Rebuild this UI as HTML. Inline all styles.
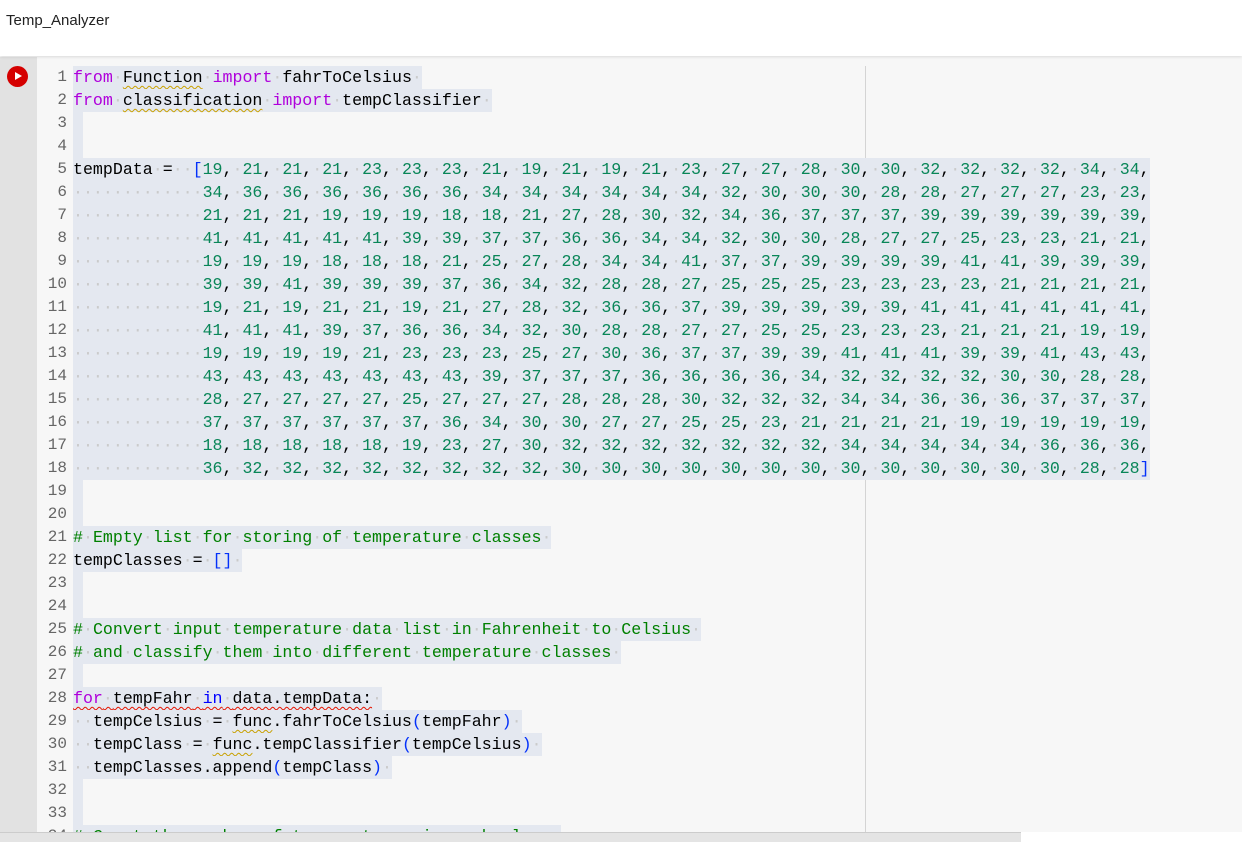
<!DOCTYPE html>
<html><head><meta charset="utf-8"><style>
*{margin:0;padding:0;box-sizing:border-box}
html{width:1242px;height:842px;overflow:hidden}
body{width:1242px;height:842px;overflow:hidden;background:#f7f7f7;position:relative;font-family:"Liberation Sans",sans-serif}
#hd{position:absolute;left:0;top:0;width:1242px;height:56px;background:#fff;box-shadow:0 1px 3px rgba(0,0,0,.12);z-index:3}
#hd span{position:absolute;left:6px;top:12px;font-size:15px;color:#222}
#gut{position:absolute;left:0;top:57px;width:37px;height:785px;background:#e2e2e2}
#run{position:absolute;left:7px;top:66px;width:21px;height:21px;border-radius:50%;background:#d50000}
#run:after{content:"";position:absolute;left:8px;top:6px;border-left:7px solid #fff;border-top:4.5px solid transparent;border-bottom:4.5px solid transparent}
#vl{position:absolute;left:865px;top:66px;width:1px;height:766px;background:#d4d4d4}
#code{position:absolute;left:0;top:0;width:1242px;height:832px;overflow:hidden}
.l{position:absolute;left:37px;height:23px;line-height:23px;font-family:"Liberation Mono",monospace;font-size:16.62px;white-space:pre;color:#000}
.l b{display:inline-block;vertical-align:top;width:30px;text-align:right;font-weight:normal;margin-right:6px;color:#666;font-size:16px}
.l s{text-decoration:none;background:#e4e8f0;display:inline-block;vertical-align:top;height:23px}
.l s.e{width:10px}
i{font-style:normal;color:#cacaca}
.k{color:#af00db}.bl{color:#0000ff}.br{color:#0431fa}.c{color:#008000}
.d{color:#098658}
c{color:#000}
.w{text-decoration:underline wavy #c8a000;text-decoration-thickness:1px;text-underline-offset:3px}
.wr{text-decoration:underline wavy #e51400;text-decoration-thickness:1px;text-underline-offset:3px}
#sb{position:absolute;left:0;top:832px;width:1021px;height:10px;background:#e4e4e4;border-top:1px solid #ccc}
#sbw{position:absolute;left:1021px;top:832px;width:221px;height:10px;background:#fff}
</style></head><body>
<div id="hd"><span>Temp_Analyzer</span></div>
<div id="gut"></div><div id="run"></div>
<div id="code">
<div id="vl"></div>
<div class="l" style="top:66px"><b>1</b><s><span class="k">from</span><i>·</i><span class="w">Function</span><i>·</i><span class="k">import</span><i>·</i>fahrToCelsius<i>·</i></s></div>
<div class="l" style="top:89px"><b>2</b><s><span class="k">from</span><i>·</i><span class="w">classification</span><i>·</i><span class="k">import</span><i>·</i>tempClassifier<i>·</i></s></div>
<div class="l" style="top:112px"><b>3</b><s class="e"></s></div>
<div class="l" style="top:135px"><b>4</b><s class="e"></s></div>
<div class="l" style="top:158px"><b>5</b><s>tempData<i>·</i>=<i>··</i><span class="br">[</span><span class="d">19<c>,<i>·</i></c>21<c>,<i>·</i></c>21<c>,<i>·</i></c>21<c>,<i>·</i></c>23<c>,<i>·</i></c>23<c>,<i>·</i></c>23<c>,<i>·</i></c>21<c>,<i>·</i></c>19<c>,<i>·</i></c>21<c>,<i>·</i></c>19<c>,<i>·</i></c>21<c>,<i>·</i></c>23<c>,<i>·</i></c>27<c>,<i>·</i></c>27<c>,<i>·</i></c>28<c>,<i>·</i></c>30<c>,<i>·</i></c>30<c>,<i>·</i></c>32<c>,<i>·</i></c>32<c>,<i>·</i></c>32<c>,<i>·</i></c>32<c>,<i>·</i></c>34<c>,<i>·</i></c>34<c>,</c></span></s></div>
<div class="l" style="top:181px"><b>6</b><s><i>·············</i><span class="d">34<c>,<i>·</i></c>36<c>,<i>·</i></c>36<c>,<i>·</i></c>36<c>,<i>·</i></c>36<c>,<i>·</i></c>36<c>,<i>·</i></c>36<c>,<i>·</i></c>34<c>,<i>·</i></c>34<c>,<i>·</i></c>34<c>,<i>·</i></c>34<c>,<i>·</i></c>34<c>,<i>·</i></c>34<c>,<i>·</i></c>32<c>,<i>·</i></c>30<c>,<i>·</i></c>30<c>,<i>·</i></c>30<c>,<i>·</i></c>28<c>,<i>·</i></c>28<c>,<i>·</i></c>27<c>,<i>·</i></c>27<c>,<i>·</i></c>27<c>,<i>·</i></c>23<c>,<i>·</i></c>23<c>,</c></span></s></div>
<div class="l" style="top:204px"><b>7</b><s><i>·············</i><span class="d">21<c>,<i>·</i></c>21<c>,<i>·</i></c>21<c>,<i>·</i></c>19<c>,<i>·</i></c>19<c>,<i>·</i></c>19<c>,<i>·</i></c>18<c>,<i>·</i></c>18<c>,<i>·</i></c>21<c>,<i>·</i></c>27<c>,<i>·</i></c>28<c>,<i>·</i></c>30<c>,<i>·</i></c>32<c>,<i>·</i></c>34<c>,<i>·</i></c>36<c>,<i>·</i></c>37<c>,<i>·</i></c>37<c>,<i>·</i></c>37<c>,<i>·</i></c>39<c>,<i>·</i></c>39<c>,<i>·</i></c>39<c>,<i>·</i></c>39<c>,<i>·</i></c>39<c>,<i>·</i></c>39<c>,</c></span></s></div>
<div class="l" style="top:227px"><b>8</b><s><i>·············</i><span class="d">41<c>,<i>·</i></c>41<c>,<i>·</i></c>41<c>,<i>·</i></c>41<c>,<i>·</i></c>41<c>,<i>·</i></c>39<c>,<i>·</i></c>39<c>,<i>·</i></c>37<c>,<i>·</i></c>37<c>,<i>·</i></c>36<c>,<i>·</i></c>36<c>,<i>·</i></c>34<c>,<i>·</i></c>34<c>,<i>·</i></c>32<c>,<i>·</i></c>30<c>,<i>·</i></c>30<c>,<i>·</i></c>28<c>,<i>·</i></c>27<c>,<i>·</i></c>27<c>,<i>·</i></c>25<c>,<i>·</i></c>23<c>,<i>·</i></c>23<c>,<i>·</i></c>21<c>,<i>·</i></c>21<c>,</c></span></s></div>
<div class="l" style="top:250px"><b>9</b><s><i>·············</i><span class="d">19<c>,<i>·</i></c>19<c>,<i>·</i></c>19<c>,<i>·</i></c>18<c>,<i>·</i></c>18<c>,<i>·</i></c>18<c>,<i>·</i></c>21<c>,<i>·</i></c>25<c>,<i>·</i></c>27<c>,<i>·</i></c>28<c>,<i>·</i></c>34<c>,<i>·</i></c>34<c>,<i>·</i></c>41<c>,<i>·</i></c>37<c>,<i>·</i></c>37<c>,<i>·</i></c>39<c>,<i>·</i></c>39<c>,<i>·</i></c>39<c>,<i>·</i></c>39<c>,<i>·</i></c>41<c>,<i>·</i></c>41<c>,<i>·</i></c>39<c>,<i>·</i></c>39<c>,<i>·</i></c>39<c>,</c></span></s></div>
<div class="l" style="top:273px"><b>10</b><s><i>·············</i><span class="d">39<c>,<i>·</i></c>39<c>,<i>·</i></c>41<c>,<i>·</i></c>39<c>,<i>·</i></c>39<c>,<i>·</i></c>39<c>,<i>·</i></c>37<c>,<i>·</i></c>36<c>,<i>·</i></c>34<c>,<i>·</i></c>32<c>,<i>·</i></c>28<c>,<i>·</i></c>28<c>,<i>·</i></c>27<c>,<i>·</i></c>25<c>,<i>·</i></c>25<c>,<i>·</i></c>25<c>,<i>·</i></c>23<c>,<i>·</i></c>23<c>,<i>·</i></c>23<c>,<i>·</i></c>23<c>,<i>·</i></c>21<c>,<i>·</i></c>21<c>,<i>·</i></c>21<c>,<i>·</i></c>21<c>,</c></span></s></div>
<div class="l" style="top:296px"><b>11</b><s><i>·············</i><span class="d">19<c>,<i>·</i></c>21<c>,<i>·</i></c>19<c>,<i>·</i></c>21<c>,<i>·</i></c>21<c>,<i>·</i></c>19<c>,<i>·</i></c>21<c>,<i>·</i></c>27<c>,<i>·</i></c>28<c>,<i>·</i></c>32<c>,<i>·</i></c>36<c>,<i>·</i></c>36<c>,<i>·</i></c>37<c>,<i>·</i></c>39<c>,<i>·</i></c>39<c>,<i>·</i></c>39<c>,<i>·</i></c>39<c>,<i>·</i></c>39<c>,<i>·</i></c>41<c>,<i>·</i></c>41<c>,<i>·</i></c>41<c>,<i>·</i></c>41<c>,<i>·</i></c>41<c>,<i>·</i></c>41<c>,</c></span></s></div>
<div class="l" style="top:319px"><b>12</b><s><i>·············</i><span class="d">41<c>,<i>·</i></c>41<c>,<i>·</i></c>41<c>,<i>·</i></c>39<c>,<i>·</i></c>37<c>,<i>·</i></c>36<c>,<i>·</i></c>36<c>,<i>·</i></c>34<c>,<i>·</i></c>32<c>,<i>·</i></c>30<c>,<i>·</i></c>28<c>,<i>·</i></c>28<c>,<i>·</i></c>27<c>,<i>·</i></c>27<c>,<i>·</i></c>25<c>,<i>·</i></c>25<c>,<i>·</i></c>23<c>,<i>·</i></c>23<c>,<i>·</i></c>23<c>,<i>·</i></c>21<c>,<i>·</i></c>21<c>,<i>·</i></c>21<c>,<i>·</i></c>19<c>,<i>·</i></c>19<c>,</c></span></s></div>
<div class="l" style="top:342px"><b>13</b><s><i>·············</i><span class="d">19<c>,<i>·</i></c>19<c>,<i>·</i></c>19<c>,<i>·</i></c>19<c>,<i>·</i></c>21<c>,<i>·</i></c>23<c>,<i>·</i></c>23<c>,<i>·</i></c>23<c>,<i>·</i></c>25<c>,<i>·</i></c>27<c>,<i>·</i></c>30<c>,<i>·</i></c>36<c>,<i>·</i></c>37<c>,<i>·</i></c>37<c>,<i>·</i></c>39<c>,<i>·</i></c>39<c>,<i>·</i></c>41<c>,<i>·</i></c>41<c>,<i>·</i></c>41<c>,<i>·</i></c>39<c>,<i>·</i></c>39<c>,<i>·</i></c>41<c>,<i>·</i></c>43<c>,<i>·</i></c>43<c>,</c></span></s></div>
<div class="l" style="top:365px"><b>14</b><s><i>·············</i><span class="d">43<c>,<i>·</i></c>43<c>,<i>·</i></c>43<c>,<i>·</i></c>43<c>,<i>·</i></c>43<c>,<i>·</i></c>43<c>,<i>·</i></c>43<c>,<i>·</i></c>39<c>,<i>·</i></c>37<c>,<i>·</i></c>37<c>,<i>·</i></c>37<c>,<i>·</i></c>36<c>,<i>·</i></c>36<c>,<i>·</i></c>36<c>,<i>·</i></c>36<c>,<i>·</i></c>34<c>,<i>·</i></c>32<c>,<i>·</i></c>32<c>,<i>·</i></c>32<c>,<i>·</i></c>32<c>,<i>·</i></c>30<c>,<i>·</i></c>30<c>,<i>·</i></c>28<c>,<i>·</i></c>28<c>,</c></span></s></div>
<div class="l" style="top:388px"><b>15</b><s><i>·············</i><span class="d">28<c>,<i>·</i></c>27<c>,<i>·</i></c>27<c>,<i>·</i></c>27<c>,<i>·</i></c>27<c>,<i>·</i></c>25<c>,<i>·</i></c>27<c>,<i>·</i></c>27<c>,<i>·</i></c>27<c>,<i>·</i></c>28<c>,<i>·</i></c>28<c>,<i>·</i></c>28<c>,<i>·</i></c>30<c>,<i>·</i></c>32<c>,<i>·</i></c>32<c>,<i>·</i></c>32<c>,<i>·</i></c>34<c>,<i>·</i></c>34<c>,<i>·</i></c>36<c>,<i>·</i></c>36<c>,<i>·</i></c>36<c>,<i>·</i></c>37<c>,<i>·</i></c>37<c>,<i>·</i></c>37<c>,</c></span></s></div>
<div class="l" style="top:411px"><b>16</b><s><i>·············</i><span class="d">37<c>,<i>·</i></c>37<c>,<i>·</i></c>37<c>,<i>·</i></c>37<c>,<i>·</i></c>37<c>,<i>·</i></c>37<c>,<i>·</i></c>36<c>,<i>·</i></c>34<c>,<i>·</i></c>30<c>,<i>·</i></c>30<c>,<i>·</i></c>27<c>,<i>·</i></c>27<c>,<i>·</i></c>25<c>,<i>·</i></c>25<c>,<i>·</i></c>23<c>,<i>·</i></c>21<c>,<i>·</i></c>21<c>,<i>·</i></c>21<c>,<i>·</i></c>21<c>,<i>·</i></c>19<c>,<i>·</i></c>19<c>,<i>·</i></c>19<c>,<i>·</i></c>19<c>,<i>·</i></c>19<c>,</c></span></s></div>
<div class="l" style="top:434px"><b>17</b><s><i>·············</i><span class="d">18<c>,<i>·</i></c>18<c>,<i>·</i></c>18<c>,<i>·</i></c>18<c>,<i>·</i></c>18<c>,<i>·</i></c>19<c>,<i>·</i></c>23<c>,<i>·</i></c>27<c>,<i>·</i></c>30<c>,<i>·</i></c>32<c>,<i>·</i></c>32<c>,<i>·</i></c>32<c>,<i>·</i></c>32<c>,<i>·</i></c>32<c>,<i>·</i></c>32<c>,<i>·</i></c>32<c>,<i>·</i></c>34<c>,<i>·</i></c>34<c>,<i>·</i></c>34<c>,<i>·</i></c>34<c>,<i>·</i></c>34<c>,<i>·</i></c>36<c>,<i>·</i></c>36<c>,<i>·</i></c>36<c>,</c></span></s></div>
<div class="l" style="top:457px"><b>18</b><s><i>·············</i><span class="d">36<c>,<i>·</i></c>32<c>,<i>·</i></c>32<c>,<i>·</i></c>32<c>,<i>·</i></c>32<c>,<i>·</i></c>32<c>,<i>·</i></c>32<c>,<i>·</i></c>32<c>,<i>·</i></c>32<c>,<i>·</i></c>30<c>,<i>·</i></c>30<c>,<i>·</i></c>30<c>,<i>·</i></c>30<c>,<i>·</i></c>30<c>,<i>·</i></c>30<c>,<i>·</i></c>30<c>,<i>·</i></c>30<c>,<i>·</i></c>30<c>,<i>·</i></c>30<c>,<i>·</i></c>30<c>,<i>·</i></c>30<c>,<i>·</i></c>30<c>,<i>·</i></c>28<c>,<i>·</i></c>28</span><span class="br">]</span></s></div>
<div class="l" style="top:480px"><b>19</b><s class="e"></s></div>
<div class="l" style="top:503px"><b>20</b><s class="e"></s></div>
<div class="l" style="top:526px"><b>21</b><s><span class="c">#<i>·</i>Empty<i>·</i>list<i>·</i>for<i>·</i>storing<i>·</i>of<i>·</i>temperature<i>·</i>classes<i>·</i></span></s></div>
<div class="l" style="top:549px"><b>22</b><s>tempClasses<i>·</i>=<i>·</i><span class="br">[]</span><i>·</i></s></div>
<div class="l" style="top:572px"><b>23</b><s class="e"></s></div>
<div class="l" style="top:595px"><b>24</b><s class="e"></s></div>
<div class="l" style="top:618px"><b>25</b><s><span class="c">#<i>·</i>Convert<i>·</i>input<i>·</i>temperature<i>·</i>data<i>·</i>list<i>·</i>in<i>·</i>Fahrenheit<i>·</i>to<i>·</i>Celsius<i>·</i></span></s></div>
<div class="l" style="top:641px"><b>26</b><s><span class="c">#<i>·</i>and<i>·</i>classify<i>·</i>them<i>·</i>into<i>·</i>different<i>·</i>temperature<i>·</i>classes<i>·</i></span></s></div>
<div class="l" style="top:664px"><b>27</b><s class="e"></s></div>
<div class="l" style="top:687px"><b>28</b><s><span class="wr"><span class="k">for</span><i>·</i>tempFahr<i>·</i><span class="bl">in</span><i>·</i>data.tempData:</span><i>·</i></s></div>
<div class="l" style="top:710px"><b>29</b><s><i>··</i>tempCelsius<i>·</i>=<i>·</i><span class="w">func</span>.fahrToCelsius<span class="br">(</span>tempFahr<span class="br">)</span><i>·</i></s></div>
<div class="l" style="top:733px"><b>30</b><s><i>··</i>tempClass<i>·</i>=<i>·</i><span class="w">func</span>.tempClassifier<span class="br">(</span>tempCelsius<span class="br">)</span><i>·</i></s></div>
<div class="l" style="top:756px"><b>31</b><s><i>··</i>tempClasses.append<span class="br">(</span>tempClass<span class="br">)</span><i>·</i></s></div>
<div class="l" style="top:779px"><b>32</b><s class="e"></s></div>
<div class="l" style="top:802px"><b>33</b><s class="e"></s></div>
<div class="l" style="top:825px"><b>34</b><s><span class="c">#<i>·</i>Count<i>·</i>the<i>·</i>number<i>·</i>of<i>·</i>temperatures<i>·</i>in<i>·</i>each<i>·</i>class<i>·</i></span></s></div>
</div>
<div id="sb"></div><div id="sbw"></div>
</body></html>
